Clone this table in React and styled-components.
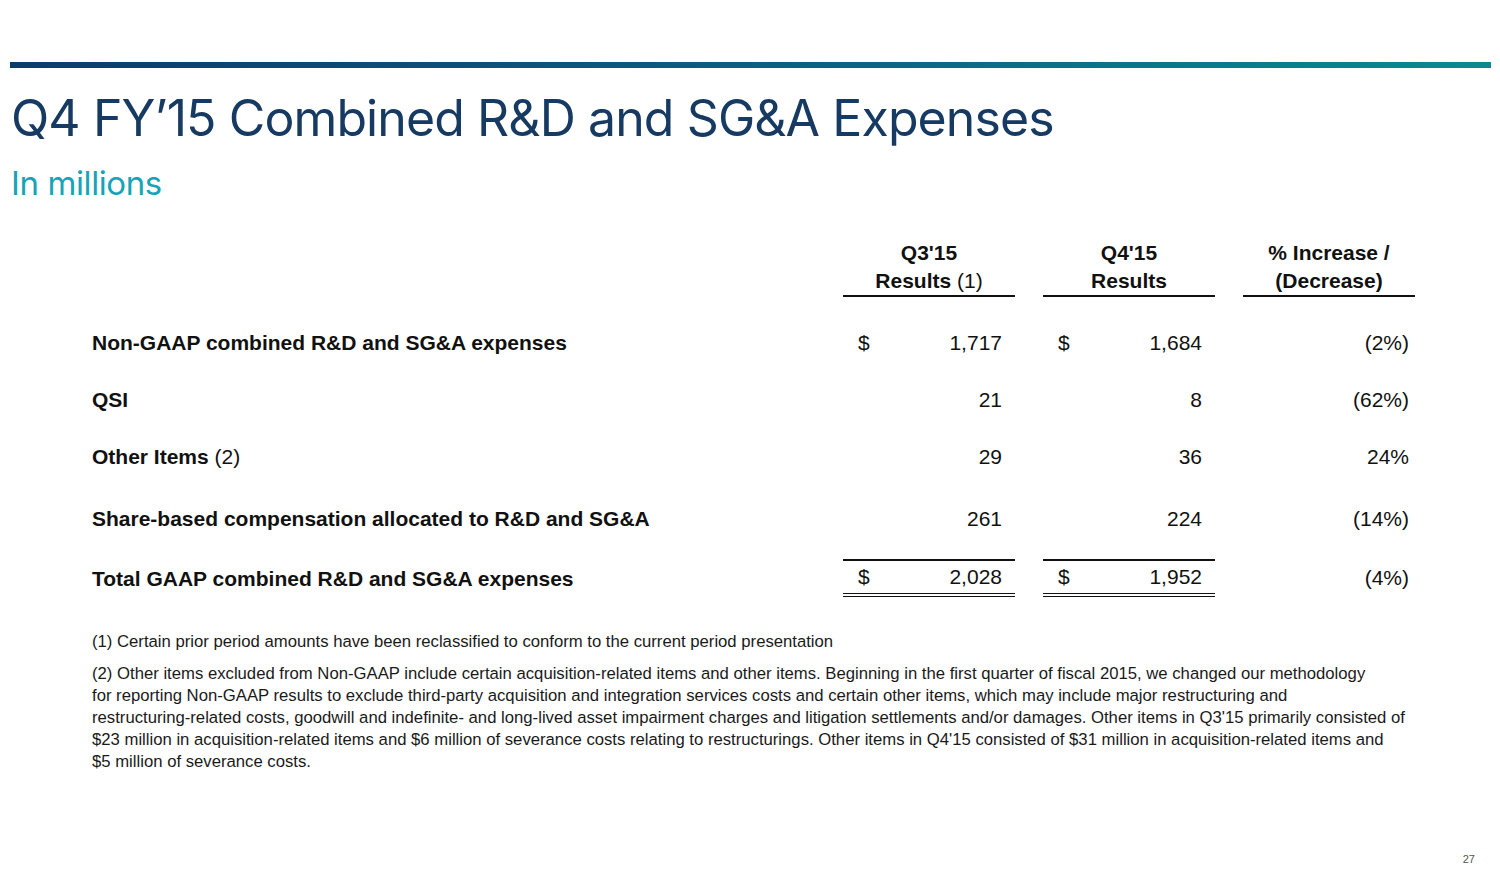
import React from "react";
import styled, { createGlobalStyle } from "styled-components";

const Global = createGlobalStyle`
  html, body { margin: 0; padding: 0; background: #fff; }
  body { font-family: "Liberation Sans", Arial, sans-serif; color: #111; }
`;

const Page = styled.div`
  width: 1500px;
  height: 886px;
  position: relative;
  box-sizing: border-box;
  padding-top: 62px;
  overflow: hidden;
`;

const TopBar = styled.div`
  margin-left: 10px;
  width: 1481px;
  height: 6px;
  background: linear-gradient(90deg, #0d3b6b 0%, #0b5a80 45%, #0a8a90 100%);
`;

const Title = styled.h1`
  margin: 20px 0 0 11px;
  font-family: Inter, "Noto Sans", sans-serif;
  font-weight: 400;
  font-size: 50px;
  line-height: 60px;
  letter-spacing: -0.9px;
  color: #163a62;
`;

const Subtitle = styled.div`
  margin: 12px 0 0 11px;
  font-family: Inter, "Noto Sans", sans-serif;
  font-size: 33px;
  line-height: 46px;
  letter-spacing: -0.4px;
  color: #17a3b8;
`;

const Grid = styled.div`
  display: grid;
  grid-template-columns: 723px 172px 172px 172px;
  column-gap: 28px;
  margin-left: 92px;
  margin-top: ${(p) => p.$mt || 0}px;
`;

const HeadCell = styled.div`
  grid-column: ${(p) => p.$col};
  text-align: center;
  font-weight: 700;
  font-size: 21px;
  line-height: 28px;
  border-bottom: 2px solid #111;
  height: 58px;
  box-sizing: border-box;
`;

const Light = styled.span`
  font-weight: 400;
`;

const Label = styled.div`
  font-weight: 700;
  font-size: 21px;
  line-height: ${(p) => p.$h}px;
  height: ${(p) => p.$h}px;
  box-sizing: border-box;
  padding-top: ${(p) => p.$pt || 0}px;
  white-space: nowrap;
`;

const Amount = styled.div`
  display: flex;
  justify-content: space-between;
  align-items: center;
  font-size: 21px;
  height: ${(p) => p.$h}px;
  box-sizing: border-box;
  padding: 0 13px 0 15px;
  border-top: ${(p) => (p.$total ? "2px solid #111" : "none")};
  border-bottom: ${(p) => (p.$total ? "4px double #111" : "none")};
`;

const Pct = styled.div`
  font-size: 21px;
  height: ${(p) => p.$h}px;
  line-height: ${(p) => p.$h}px;
  text-align: right;
  padding-right: 6px;
`;

const Notes = styled.div`
  margin: 34px 0 0 92px;
  width: 1370px;
  font-size: 16.7px;
  color: #1a1a1a;
`;

const Note = styled.p`
  margin: 0 0 10px 0;
  line-height: 22px;
  white-space: nowrap;
`;

const PageNum = styled.div`
  position: absolute;
  right: 25px;
  bottom: 21px;
  font-size: 11px;
  color: #555;
`;

const rows = [
  { label: "Non-GAAP combined R&D and SG&A expenses", a: "1,717", b: "1,684", p: "(2%)", dollar: true, mt: 26 },
  { label: "QSI", a: "21", b: "8", p: "(62%)", mt: 17 },
  { label: "Other Items", note: "(2)", a: "29", b: "36", p: "24%", mt: 17 },
  { label: "Share-based compensation allocated to R&D and SG&A", a: "261", b: "224", p: "(14%)", mt: 22 },
];

export default function App() {
  return (
    <Page>
      <Global />
      <TopBar />
      <Title>Q4 FY’15 Combined R&amp;D and SG&amp;A Expenses</Title>
      <Subtitle>In millions</Subtitle>
      <Grid $mt={33}>
        <div />
        <HeadCell $col={2}>
          Q3'15
          <br />
          Results <Light>(1)</Light>
        </HeadCell>
        <HeadCell $col={3}>
          Q4'15
          <br />
          Results
        </HeadCell>
        <HeadCell $col={4}>
          % Increase /
          <br />
          (Decrease)
        </HeadCell>
      </Grid>
      {rows.map((r) => (
        <Grid key={r.label} $mt={r.mt}>
          <Label $h={40}>
            {r.label}
            {r.note && <Light> {r.note}</Light>}
          </Label>
          <Amount $h={40}>
            <span>{r.dollar ? "$" : ""}</span>
            <span>{r.a}</span>
          </Amount>
          <Amount $h={40}>
            <span>{r.dollar ? "$" : ""}</span>
            <span>{r.b}</span>
          </Amount>
          <Pct $h={40}>{r.p}</Pct>
        </Grid>
      ))}
      <Grid $mt={20}>
        <Label $h={38} $pt={1}>
          Total GAAP combined R&amp;D and SG&amp;A expenses
        </Label>
        <Amount $h={38} $total>
          <span>$</span>
          <span>2,028</span>
        </Amount>
        <Amount $h={38} $total>
          <span>$</span>
          <span>1,952</span>
        </Amount>
        <Pct $h={38}>(4%)</Pct>
      </Grid>
      <Notes>
        <Note>(1) Certain prior period amounts have been reclassified to conform to the current period presentation</Note>
        <Note>
          (2) Other items excluded from Non-GAAP include certain acquisition-related items and other items. Beginning in the first quarter of fiscal 2015, we changed our methodology
          <br />
          for reporting Non-GAAP results to exclude third-party acquisition and integration services costs and certain other items, which may include major restructuring and
          <br />
          restructuring-related costs, goodwill and indefinite- and long-lived asset impairment charges and litigation settlements and/or damages. Other items in Q3'15 primarily consisted of
          <br />
          $23 million in acquisition-related items and $6 million of severance costs relating to restructurings. Other items in Q4'15 consisted of $31 million in acquisition-related items and
          <br />
          $5 million of severance costs.
        </Note>
      </Notes>
      <PageNum>27</PageNum>
    </Page>
  );
}
